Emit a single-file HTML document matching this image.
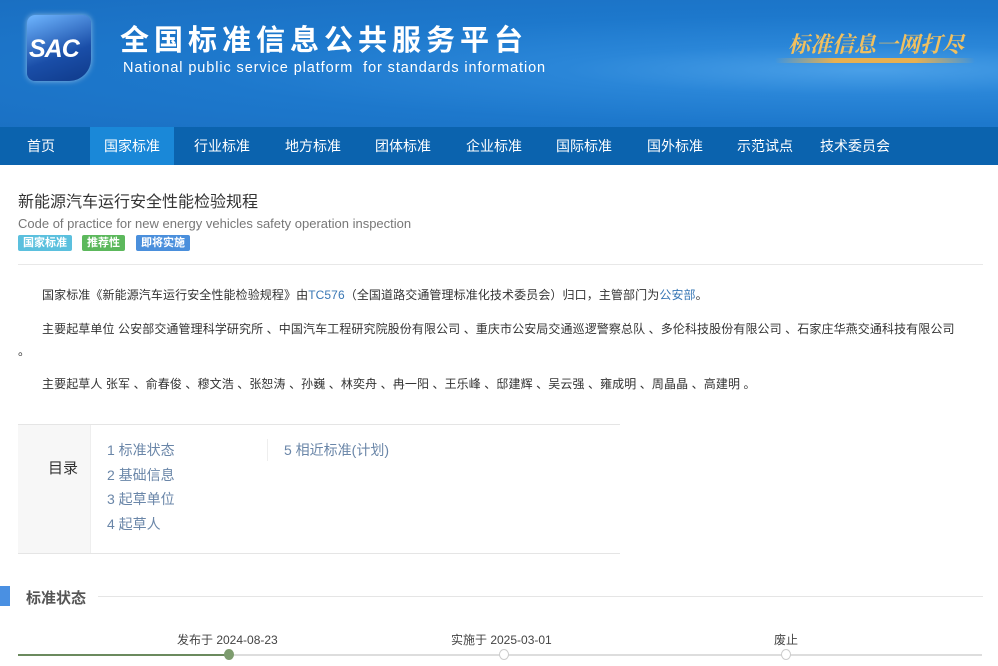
<!DOCTYPE html>
<html><head><meta charset="utf-8"><style>
*{margin:0;padding:0;box-sizing:border-box}
body{width:998px;height:666px;overflow:hidden;background:#fff;font-family:"Liberation Sans","Noto Sans CJK SC",sans-serif;color:#333;position:relative}
.hdr{position:absolute;left:0;top:0;width:998px;height:127px;background:radial-gradient(ellipse at 870px 70px,#4aa0e8 0,#2a86d8 25%,#1d78cc 55%,#1a6fc2 100%)}
.logo{position:absolute;left:27px;top:15px;width:64px;height:66px;border-radius:8px 8px 22px 8px;background:linear-gradient(160deg,#6fb6ff,#1a4ea8 60%,#0f3a8a);box-shadow:0 0 6px rgba(255,255,255,.5)}
.logo span{position:absolute;left:2px;top:20px;font:italic bold 25px "Liberation Sans",sans-serif;color:#fff;letter-spacing:-1px}
.t1{position:absolute;left:120px;top:18px;font-size:29px;font-weight:bold;color:#fff;letter-spacing:5px;font-family:"Noto Sans CJK SC",sans-serif;line-height:40px}
.t2{position:absolute;left:123px;top:60px;font-size:14.5px;color:#fff;letter-spacing:.9px}
.slogan{position:absolute;left:788px;top:28px;font-size:22px;color:#f0c060;font-style:italic;font-family:"Noto Serif CJK SC",serif;font-weight:bold}
.gold{position:absolute;left:775px;top:58px;width:200px;height:5px;border-radius:3px;background:linear-gradient(90deg,rgba(240,190,90,0),#e8b050 30%,#e8b050 70%,rgba(240,190,90,0))}
.nav{position:absolute;left:0;top:127px;width:998px;height:38px;background:#0b63ae}
.nav a{position:absolute;top:0;height:38px;line-height:38px;color:#fff;font-size:14px;text-decoration:none}
.nav a.on{background:#1a88d8;padding:0 14px}
.title{position:absolute;left:18px;top:194px;font-size:16px;color:#333;line-height:18px}
.en{position:absolute;left:18px;top:216px;font-size:13px;color:#777}
.tag{position:absolute;top:235px;height:16px;line-height:16px;font-size:11px;color:#fff;padding:0 5px;border-radius:2px;font-weight:bold}
.hr{position:absolute;left:18px;top:264px;width:965px;height:1px;background:#e8e8e8}
.p{position:absolute;left:42px;font-size:12px;color:#333;letter-spacing:.1px}
.p a{color:#3a78b5}
.toc{position:absolute;left:18px;top:424px;width:602px;height:130px;border-top:1px solid #e5e5e5;border-bottom:1px solid #e5e5e5}
.toc .l{position:absolute;left:0;top:0;width:73px;height:128px;background:#f7f7f7;border-right:1px solid #eee}
.toc .l span{position:absolute;left:30px;top:32px;font-size:15px;color:#333}
.ti{position:absolute;font-size:14px;color:#6a86a8}
.sec{position:absolute;left:0;top:586px;width:10px;height:20px;background:#4a90e2}
.sect{position:absolute;left:26px;top:587px;font-size:15px;font-weight:bold;color:#555}
.secl{position:absolute;left:98px;top:596px;width:885px;height:1px;background:#e5e5e5}
.tl{position:absolute;top:631px;font-size:12px;color:#444}
.line{position:absolute;top:654px;height:2px}
.dot{position:absolute;top:649px;width:10px;height:11px;border-radius:50%;border:1px solid #ccc;background:#fff}
</style></head><body>
<div class="hdr">
<div class="logo"><span>SAC</span></div>
<div class="t1">全国标准信息公共服务平台</div>
<div class="t2">National public service platform &nbsp;for standards information</div>
<div class="slogan">标准信息一网打尽</div>
<div class="gold"></div>
</div>
<div class="nav">
<a style="left:27px">首页</a>
<a class="on" style="left:90px">国家标准</a>
<a style="left:194px">行业标准</a>
<a style="left:285px">地方标准</a>
<a style="left:375px">团体标准</a>
<a style="left:466px">企业标准</a>
<a style="left:556px">国际标准</a>
<a style="left:647px">国外标准</a>
<a style="left:737px">示范试点</a>
<a style="left:820px">技术委员会</a>
</div>
<div class="title">新能源汽车运行安全性能检验规程</div>
<div class="en">Code of practice for new energy vehicles safety operation inspection</div>
<div class="tag" style="left:18px;background:#5bc0de">国家标准</div>
<div class="tag" style="left:82px;background:#5cb85c">推荐性</div>
<div class="tag" style="left:136px;background:#4a8fdc">即将实施</div>
<div class="hr"></div>
<div class="p" style="top:286px">国家标准《新能源汽车运行安全性能检验规程》由<a>TC576</a>（全国道路交通管理标准化技术委员会）归口，主管部门为<a>公安部</a>。</div>
<div class="p" style="top:320px">主要起草单位 公安部交通管理科学研究所 、中国汽车工程研究院股份有限公司 、重庆市公安局交通巡逻警察总队 、多伦科技股份有限公司 、石家庄华燕交通科技有限公司</div>
<div class="p" style="top:342px;left:18px">。</div>
<div class="p" style="top:375px">主要起草人 张军 、俞春俊 、穆文浩 、张恕涛 、孙巍 、林奕舟 、冉一阳 、王乐峰 、邸建辉 、吴云强 、雍成明 、周晶晶 、高建明 。</div>
<div class="toc"><div class="l"><span>目录</span></div>
<div style="position:absolute;left:249px;top:14px;width:1px;height:22px;background:#eee"></div>
</div>
<div class="ti" style="left:107px;top:440px">1 标准状态</div>
<div class="ti" style="left:107px;top:465px">2 基础信息</div>
<div class="ti" style="left:107px;top:489px">3 起草单位</div>
<div class="ti" style="left:107px;top:514px">4 起草人</div>
<div class="ti" style="left:284px;top:440px">5 相近标准(计划)</div>
<div class="sec"></div><div class="sect">标准状态</div><div class="secl"></div>
<div class="tl" style="left:177px">发布于 2024-08-23</div>
<div class="tl" style="left:451px">实施于 2025-03-01</div>
<div class="tl" style="left:774px">废止</div>
<div class="line" style="left:18px;width:212px;background:#6b8a5e"></div>
<div class="line" style="left:230px;width:752px;background:#ddd"></div>
<div class="dot" style="left:224px;background:#7d9c6e;border-color:#7d9c6e"></div>
<div class="dot" style="left:499px"></div>
<div class="dot" style="left:781px"></div>
</body></html>
